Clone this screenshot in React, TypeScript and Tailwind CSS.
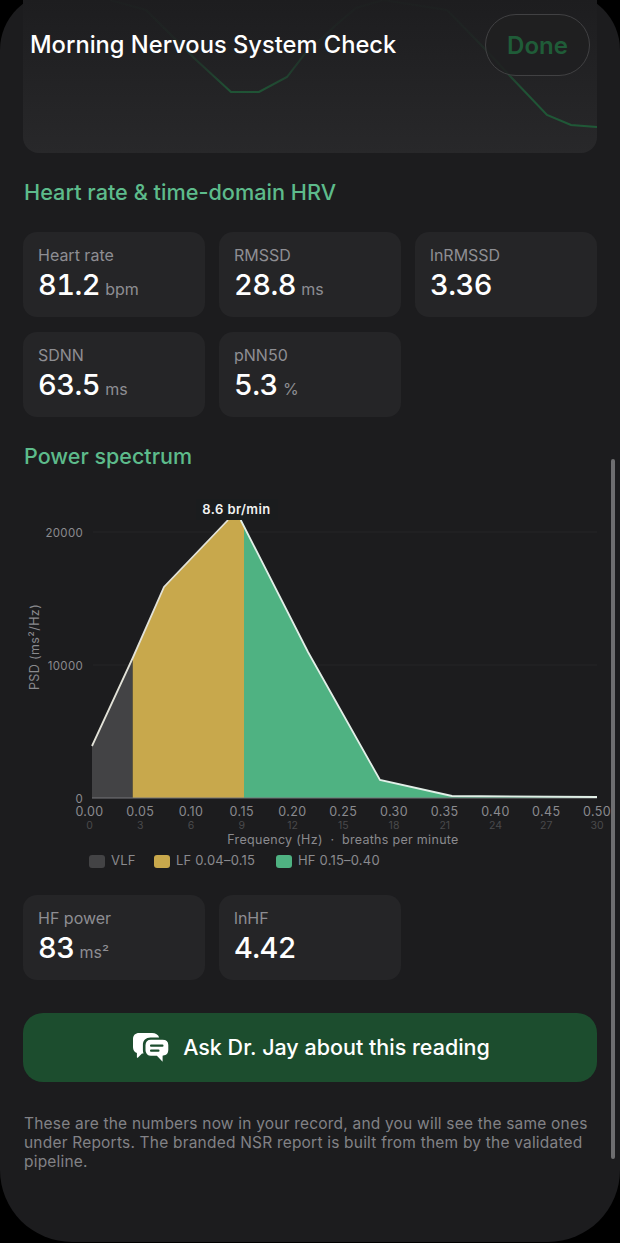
const metricsTop = [
    { label: 'Heart rate', value: '81.2', unit: 'bpm' },
    { label: 'RMSSD', value: '28.8', unit: 'ms' },
    { label: 'lnRMSSD', value: '3.36' },
    { label: 'SDNN', value: '63.5', unit: 'ms' },
    { label: 'pNN50', value: '5.3', unit: '%' },
];

const metricsHf = [
    { label: 'HF power', value: '83', unit: 'ms²' },
    { label: 'lnHF', value: '4.42' },
];

const ticks = [
    ['0.00', '0'], ['0.05', '3'], ['0.10', '6'], ['0.15', '9'], ['0.20', '12'], ['0.25', '15'],
    ['0.30', '18'], ['0.35', '21'], ['0.40', '24'], ['0.45', '27'], ['0.50', '30'],
];

const Metric = ({ label, value, unit }: { label: string; value: string; unit?: string }) => (
    <div className="h-[85px] rounded-[14px] bg-[#252527] pl-[15px] pt-[13px]">
        <div className="text-[16px] leading-[20px] text-[#8e8e93]">{label}</div>
        <div className="mt-[5px] flex items-baseline leading-[30px]">
            <span className="text-[29px] font-[550] tracking-[-0.5px] tabular-nums text-white">{value}</span>
            {unit && <span className="ml-[5px] text-[16px] text-[#8e8e93]">{unit}</span>}
        </div>
    </div>
);

const TrendLine = () => (
    <svg className="absolute inset-0 h-full w-full" viewBox="0 0 574 153">
        <defs>
            <linearGradient id="fade" x1="0" y1="0" x2="0" y2="153" gradientUnits="userSpaceOnUse">
                <stop offset="0" stopColor="#1f5c38" stopOpacity="0.03" />
                <stop offset="0.25" stopColor="#1f5c38" stopOpacity="0.1" />
                <stop offset="0.45" stopColor="#1f5c38" stopOpacity="0.4" />
                <stop offset="0.6" stopColor="#1f5c38" stopOpacity="0.85" />
                <stop offset="1" stopColor="#1f5c38" />
            </linearGradient>
        </defs>
        <polyline
            fill="none"
            stroke="url(#fade)"
            strokeWidth="2"
            points="87,0 123,10 171,58 208,92 236,92 264,77 281,55 313,25 333,8 360,0 424,10 463,50 487,76 524,115 548,125 574,127"
        />
    </svg>
);

const Spectrum = () => (
    <svg className="block h-[355px] w-[620px] -ml-[23px]" viewBox="0 0 620 355">
        <g transform="translate(0,-495)">
            <line x1="93" y1="532" x2="597" y2="532" stroke="#252527" />
            <line x1="93" y1="665" x2="597" y2="665" stroke="#252527" />
            <polygon fill="#434345" points="92,746 132.7,658 132.7,798 92,798" />
            <polygon fill="#c8a84c" points="132.7,658 164,587 228,520 240.7,520 244,526.5 244,798 132.7,798" />
            <polygon fill="#4fb282" points="244,526.5 308,652 380,780 452,796 597,797 597,798 244,798" />
            <line x1="92" y1="798" x2="597" y2="798" stroke="#77777a" />
            <polyline
                fill="none"
                stroke="#e2e2d8"
                strokeWidth="1.8"
                points="92,746 132.7,658 164,587 228,520"
            />
            <polyline
                fill="none"
                stroke="#e2efe8"
                strokeWidth="1.8"
                points="240.7,520 308,652 380,780 452,796 597,797"
            />
            <rect x="196" y="499" width="82" height="21" fill="#1a1c1e" />
            <text x="236.5" y="514" textAnchor="middle" fill="#f2f2f2" fontSize="13" fontWeight="600" letterSpacing="0.4">8.6 br/min</text>
            <g fill="#8a8a8e" fontSize="11.5" letterSpacing="0.3" textAnchor="end">
                <text x="83" y="537">20000</text>
                <text x="83" y="670">10000</text>
                <text x="83" y="803">0</text>
            </g>
            <text
                transform="translate(38.500,647) rotate(-90)"
                textAnchor="middle"
                fill="#8a8a8e"
                fontSize="12.5"
                letterSpacing="0.4"
            >
                PSD (ms²/Hz)
            </text>
            {ticks.map(([hz, br], i) => (
                <g key={hz} textAnchor="middle">
                    <text x={89.5 + i * 50.75} y="816" fill="#8a8a8e" fontSize="12.5" letterSpacing="0.4">{hz}</text>
                    <text x={89.5 + i * 50.75} y="829" fill="#4a4a4c" fontSize="10.5">{br}</text>
                </g>
            ))}
            <text x="343" y="844" textAnchor="middle" fill="#8a8a8e" fontSize="12.5" letterSpacing="0.3">
                Frequency (Hz)&nbsp; ·&nbsp; breaths per minute
            </text>
        </g>
    </svg>
);

const LegendItem = ({ swatch, label, width }: { swatch: string; label: string; width: string }) => (
    <div className={`flex items-center ${width}`}>
        <span className={`h-[13px] w-[16px] rounded-[3px] ${swatch}`} />
        <span className="ml-[6px] text-[13px] tracking-[0.2px] text-[#8a8a8e]">{label}</span>
    </div>
);

const ChatIcon = () => (
    <svg width="36" height="32" viewBox="0 0 36 32">
        <path
            fill="#fff"
            d="M6 1h13c3.600 0 6.200 1.600 7.200 4.400H17.500c-4.600 0-7.600 3-7.600 7.200v5.400c0 1.300.2 2.400.6 3.400H9l-4 4.200c-.5.5-1.100.2-1.100-.4v-4.100C1.600 20.300 0 18 0 15.200V7C0 3.300 2.500 1 6 1z"
        />
        <path
            fill="#fff"
            stroke="#1c4d2e"
            strokeWidth="1.400"
            d="M18 7h11.500c3.800 0 6.500 2.500 6.500 6.100v4.900c0 3.600-2.500 6-5.700 6.300v5.400c0 .7-.7 1-1.200.5l-5.500-5.800H18c-3.700 0-6.200-2.600-6.200-6.200v-4.900C11.800 9.500 14.300 7 18 7z"
        />
        <rect x="17" y="12.500" width="13.500" height="2.300" rx="1" fill="#1c4d2e" />
        <rect x="17" y="17.500" width="9.500" height="2.300" rx="1" fill="#1c4d2e" />
    </svg>
);

const App = () => {
    return (
        <div className="h-[1243px] w-[620px] overflow-hidden bg-black font-['Inter',sans-serif]">
            <div className="relative -mt-[8px] h-[1250px] rounded-t-[58px] rounded-b-[72px] bg-[#1c1c1e] px-[23px] pt-[8px]">
                <div className="relative h-[153px] overflow-hidden rounded-b-[16px] bg-linear-to-b from-[#1d1d1f] to-[#28282a]">
                    <TrendLine />
                </div>

                <h2 className="mt-[25px] pl-px text-[21.7px] leading-[28px] font-medium text-[#5dbb8b]">
                    Heart rate &amp; time-domain HRV
                </h2>
                <div className="mt-[26px] grid grid-cols-3 gap-x-[14px] gap-y-[15px]">
                    {metricsTop.map((m) => (
                        <Metric key={m.label} {...m} />
                    ))}
                </div>

                <h2 className="mt-[25px] pl-px text-[21.5px] leading-[28px] font-medium text-[#5dbb8b]">Power spectrum</h2>
                <div className="mt-[25px]">
                    <Spectrum />
                </div>
                <div className="ml-[66px] mt-[3px] flex h-[16px] items-center">
                    <LegendItem swatch="bg-[#434345]" label="VLF" width="w-[65px]" />
                    <LegendItem swatch="bg-[#c8a84c]" label="LF 0.04–0.15" width="w-[122px]" />
                    <LegendItem swatch="bg-[#4fb282]" label="HF 0.15–0.40" width="w-[122px]" />
                </div>

                <div className="mt-[26px] grid grid-cols-3 gap-x-[14px]">
                    {metricsHf.map((m) => (
                        <Metric key={m.label} {...m} />
                    ))}
                </div>

                <button className="mt-[33px] flex h-[69px] w-full items-center justify-center gap-[14px] rounded-[20px] bg-[#1c4d2e] pl-[3px] text-[21.5px] font-medium text-white">
                    <ChatIcon />
                    <span>Ask Dr. Jay about this reading</span>
                </button>

                <p className="mt-[33px] pl-px text-[15.5px] leading-[18.8px] tracking-[0.2px] text-[#828286]">
                    These are the numbers now in your record, and you will see the same ones under Reports. The branded NSR report is built from them by the validated pipeline.
                </p>

                {/* header floats over the scrolled content */}
                <div className="absolute left-[30px] right-[30px] top-[22px] flex items-center justify-between">
                    <h1 className="text-[23.7px] font-medium text-white">Morning Nervous System Check</h1>
                    <div className="flex h-[62px] w-[105px] items-center justify-center rounded-full border border-[#414143] bg-[#1f1f21]/80 pt-px text-[24px] font-semibold text-[#1f5c38]">
                        Done
                    </div>
                </div>

                {/* scroll indicator */}
                <div className="absolute right-[5px] top-[467px] h-[700px] w-[4px] rounded-full bg-[#6e6e70]" />
            </div>
        </div>
    );
};

export default App;
